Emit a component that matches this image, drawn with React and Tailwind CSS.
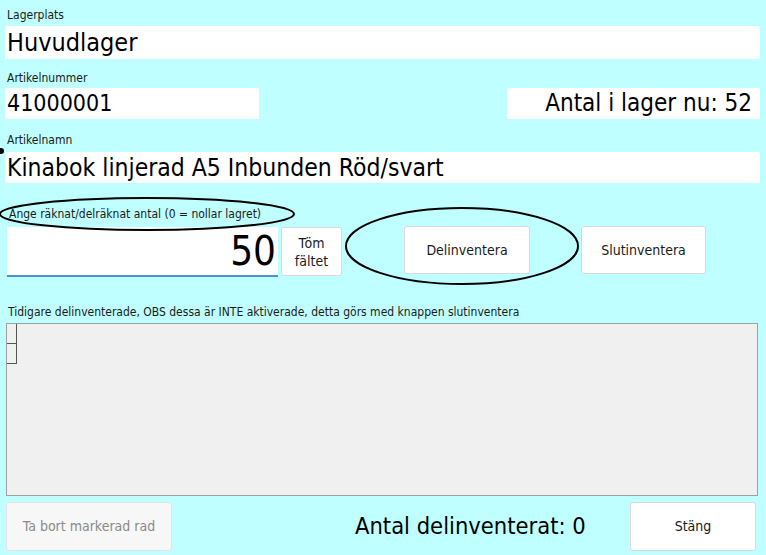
import { useState } from "react";

function Label({ children, className = "" }) {
    return <div className={"text-[12px] leading-[14px] text-[#1a1a1a] " + className}>{children}</div>;
}

function Btn({ children, className = "" }) {
    return (
        <button className={"rounded-[3px] border border-[#d9d9d9] bg-white text-[14px] text-[#1a1a1a] " + className}>
            {children}
        </button>
    );
}

export default function App() {
    const [antal, setAntal] = useState("50");

    return (
        <div className="relative w-[766px] h-[555px] bg-[#bfffff] overflow-hidden" style={{ fontFamily: '"DejaVu Sans Condensed", "DejaVu Sans", sans-serif' }}>
            <div className="flex flex-col pl-[5px] pr-[6px] pt-[8px]">
                <Label className="pl-[2px]">Lagerplats</Label>
                <div className="mt-[4px] h-[33px] bg-white pl-[2px] text-[25px] leading-[33px] text-black">Huvudlager</div>

                <Label className="pl-[2px] mt-[12px]">Artikelnummer</Label>
                <div className="mt-[3px] flex items-center justify-between">
                    <div className="w-[254px] h-[31px] bg-white pl-[2px] text-[23px] leading-[31px] text-black">41000001</div>
                    <div className="w-[253px] h-[31px] bg-white pr-[8px] text-right text-[24px] leading-[31px] text-black">Antal i lager nu: 52</div>
                </div>

                <Label className="pl-[2px] mt-[14px]">Artikelnamn</Label>
                <div className="mt-[5px] h-[31px] bg-white pl-[2px] text-[24.5px] leading-[31px] text-black">Kinabok linjerad A5 Inbunden Röd/svart</div>

                <Label className="pl-[4px] mt-[24px]">Ange räknat/delräknat antal (0 = nollar lagret)</Label>
                <div className="mt-[6px] flex items-start pl-[2px]">
                    <input
                        value={antal}
                        onChange={(e) => setAntal(e.target.value)}
                        className="w-[271px] h-[50px] bg-white border-b-2 border-[#4a90d9] pr-[2px] text-right text-[40px] text-black outline-none"
                    />
                    <Btn className="ml-[3px] w-[61px] h-[49px] leading-[18px] bg-[#fafafa]">Töm<br />fältet</Btn>
                    <Btn className="ml-[62px] mt-[-1px] w-[126px] h-[48px]">Delinventera</Btn>
                    <Btn className="ml-[51px] mt-[-1px] w-[125px] h-[48px]">Slutinventera</Btn>
                </div>

                <Label className="pl-[3px] mt-[28px]">Tidigare delinventerade, OBS dessa är INTE aktiverade, detta görs med knappen slutinventera</Label>
                <div className="mt-[4px] ml-[1px] h-[173px] w-[752px] border border-[#a0a0a0] bg-[#f0f0f0] flex flex-col">
                    <div className="w-[10px] h-[20px] border-r border-b border-[#555]" />
                    <div className="w-[10px] h-[20px] border-r border-b border-[#555]" />
                </div>

                <div className="mt-[6px] flex items-center">
                    <button className="ml-[1px] w-[166px] h-[49px] rounded-[3px] border border-[#e3e3e3] bg-[#f7f7f7] text-[14px] text-[#8a8a8a]">Ta bort markerad rad</button>
                    <div className="ml-[183px] text-[23.5px] text-black">Antal delinventerat: 0</div>
                    <Btn className="ml-auto mr-[4px] w-[126px] h-[49px]">Stäng</Btn>
                </div>
            </div>

            {/* annotation rings */}
            <svg className="absolute left-0 top-0 pointer-events-none" width="766" height="555">
                <ellipse cx="147" cy="214" rx="147" ry="16" fill="none" stroke="black" strokeWidth="2" />
                <ellipse cx="462" cy="246" rx="116" ry="38" fill="none" stroke="black" strokeWidth="2" />
                <circle cx="1" cy="151" r="3" fill="black" />
            </svg>
        </div>
    );
}
